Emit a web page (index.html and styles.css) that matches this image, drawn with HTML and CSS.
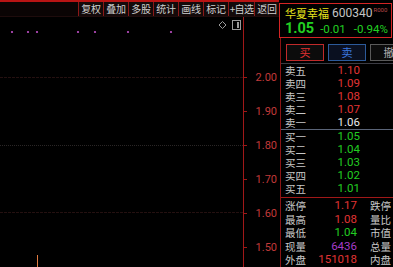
FILE: index.html
```html
<!DOCTYPE html>
<html>
<head>
<meta charset="utf-8">
<link rel="stylesheet" href="styles.css">
</head>
<body>
<div class="screen">
  <div class="left">
    <div class="topline"></div>
    <div class="toolbar">
      <span class="tb">复权</span>
      <span class="tb">叠加</span>
      <span class="tb">多股</span>
      <span class="tb">统计</span>
      <span class="tb">画线</span>
      <span class="tb">标记</span>
      <span class="tb tb-plus">+自选</span>
      <span class="tb">返回</span>
    </div>
    <div class="chart">
      <div class="plot">
        <svg class="plot-svg" width="243" height="250" viewBox="0 0 243 250">
          <line x1="0" y1="60.5" x2="243" y2="60.5" stroke="#241010" stroke-dasharray="3 1"/>
          <line x1="0" y1="128.5" x2="243" y2="128.5" stroke="#2a2626" stroke-dasharray="1 1"/>
          <line x1="0" y1="195.5" x2="243" y2="195.5" stroke="#241010" stroke-dasharray="3 1"/>
          <g fill="#c050c8">
            <circle cx="12" cy="15" r="1.1"/>
            <circle cx="28" cy="15" r="1.1"/>
            <circle cx="37" cy="15" r="1.1"/>
            <circle cx="78" cy="15" r="1.1"/>
            <circle cx="95" cy="15" r="1.1"/>
            <circle cx="128" cy="15" r="1.1"/>
            <circle cx="171" cy="15" r="1.1"/>
          </g>
          <path d="M222.5 4.5 L226 8 L222.5 11.5 L219 8 Z" fill="none" stroke="#9a9a9a" stroke-width="1"/>
          <rect x="232.5" y="3.5" width="8" height="9" fill="none" stroke="#9a9a9a" stroke-width="1"/>
          <line x1="238" y1="5" x2="238" y2="11" stroke="#d0d0d0" stroke-width="1.5"/>
          <line x1="37.5" y1="238" x2="37.5" y2="250" stroke="#e07a40" stroke-width="1"/>
        </svg>
      </div>
      <div class="axis">
        <span class="ax">2.00</span>
        <span class="ax">1.90</span>
        <span class="ax">1.80</span>
        <span class="ax">1.70</span>
        <span class="ax">1.60</span>
        <span class="ax">1.50</span>
      </div>
    </div>
  </div>
  <div class="right">
    <div class="quote">
      <div class="q-line1"><span class="q-name">华夏幸福</span><span class="q-code">600340</span><span class="q-tag">R000</span></div>
      <div class="q-line2"><span class="q-price">1.05</span><span class="q-chg">-0.01</span><span class="q-pct">-0.94%</span></div>
    </div>
    <div class="panel">
      <div class="btns">
        <span class="btn btn-buy">买</span>
        <span class="btn btn-sell">卖</span>
        <span class="btn btn-cancel">撤</span>
      </div>
      <div class="book sells">
        <div class="row"><span class="lb">卖五</span><span class="val up">1.10</span></div>
        <div class="row"><span class="lb">卖四</span><span class="val up">1.09</span></div>
        <div class="row"><span class="lb">卖三</span><span class="val up">1.08</span></div>
        <div class="row"><span class="lb">卖二</span><span class="val up">1.07</span></div>
        <div class="row"><span class="lb">卖一</span><span class="val flat">1.06</span></div>
      </div>
      <div class="book buys">
        <div class="row"><span class="lb">买一</span><span class="val down">1.05</span></div>
        <div class="row"><span class="lb">买二</span><span class="val down">1.04</span></div>
        <div class="row"><span class="lb">买三</span><span class="val down">1.03</span></div>
        <div class="row"><span class="lb">买四</span><span class="val down">1.02</span></div>
        <div class="row"><span class="lb">买五</span><span class="val down">1.01</span></div>
      </div>
      <div class="stats">
        <div class="srow"><span class="lb">涨停</span><span class="val up">1.17</span><span class="lb2">跌停</span></div>
        <div class="srow"><span class="lb">最高</span><span class="val up">1.08</span><span class="lb2">量比</span></div>
        <div class="srow"><span class="lb">最低</span><span class="val down">1.04</span><span class="lb2">市值</span></div>
        <div class="srow"><span class="lb">现量</span><span class="val vol">6436</span><span class="lb2">总量</span></div>
        <div class="srow"><span class="lb">外盘</span><span class="val up">151018</span><span class="lb2">内盘</span></div>
      </div>
    </div>
  </div>
</div>
</body>
</html>
```
FILE: styles.css
```css
html, body {
  margin: 0;
  padding: 0;
  background: #000;
}
body {
  width: 393px;
  height: 267px;
  overflow: hidden;
  font-family: "Noto Sans CJK SC", "Noto Sans", sans-serif;
  color: #c8c8c8;
}
.screen {
  display: flex;
  width: 393px;
  height: 267px;
  overflow: hidden;
}
.left {
  width: 279px;
  flex: none;
  display: flex;
  flex-direction: column;
}
.topline {
  height: 2px;
  background: #b81414;
}
.toolbar {
  height: 15px;
  display: flex;
  justify-content: flex-end;
  background: #0a0404;
  box-sizing: border-box;
  border-bottom: 1px solid #1e0c0c;
}
.tb {
  width: 25px;
  flex: none;
  box-sizing: border-box;
  border-left: 1px solid #8a1818;
  background: #140a0a;
  font-size: 10px;
  line-height: 14px;
  text-align: center;
  color: #cfcfcf;
  white-space: nowrap;
  letter-spacing: -0.3px;
}
.tb-plus {
  width: 26px;
  letter-spacing: -0.6px;
}
.chart {
  flex: 1;
  display: flex;
}
.plot {
  width: 243px;
  flex: none;
  border-right: 1px solid #a01818;
}
.plot-svg {
  display: block;
}
.axis {
  flex: 1;
  display: flex;
  flex-direction: column;
  padding-top: 43px;
}
.ax {
  height: 34px;
  display: flex;
  align-items: center;
  justify-content: flex-end;
  padding-right: 2px;
  font-family: Roboto, "Noto Sans", sans-serif;
  font-size: 11px;
  color: #c23a3a;
  position: relative;
}
.ax::before {
  content: "";
  position: absolute;
  left: 0;
  top: 17px;
  width: 3px;
  height: 1px;
  background: #a01818;
}
.right {
  width: 114px;
  flex: none;
  display: flex;
  flex-direction: column;
}
.quote {
  margin-top: 3px;
  height: 35px;
  box-sizing: border-box;
  border: 1px solid #d42424;
  margin-right: 1px;
  padding: 1px 0 0 5px;
}
.q-line1 {
  display: flex;
  align-items: flex-start;
  height: 16px;
  line-height: 16px;
  white-space: nowrap;
}
.q-name {
  font-size: 11px;
  color: #e6e21c;
}
.q-code {
  font-family: Roboto, "Noto Sans", sans-serif;
  font-size: 12px;
  color: #c4c4c4;
  margin-left: 3px;
}
.q-tag {
  font-family: Roboto, "Noto Sans", sans-serif;
  font-size: 6px;
  line-height: 10px;
  color: #b84a4a;
  margin-left: 1px;
}
.q-line2 {
  display: flex;
  align-items: baseline;
  height: 16px;
  line-height: 16px;
  white-space: nowrap;
  color: #22d022;
  font-family: Roboto, "Noto Sans", sans-serif;
}
.q-price {
  font-size: 14.5px;
  font-weight: bold;
}
.q-chg {
  font-size: 11.5px;
  margin-left: 6px;
}
.q-pct {
  font-size: 11.5px;
  margin-left: 8px;
}
.panel {
  flex: 1;
  border-left: 1px solid #8a1414;
  margin-left: 1px;
}
.btns {
  display: flex;
  gap: 4px;
  padding: 6px 0 2px 5px;
  border-bottom: 1px solid #3c3c44;
  overflow: hidden;
}
.btn {
  width: 38px;
  height: 17px;
  flex: none;
  box-sizing: border-box;
  font-size: 11px;
  line-height: 15px;
  text-align: center;
  background: #0c0c0c;
}
.btn-buy {
  border: 1px solid #c02a2a;
  color: #e03030;
}
.btn-sell {
  border: 1px solid #2c5a9a;
  color: #3a78e0;
  background: #0a1020;
}
.btn-cancel {
  border: 1px solid #5a5a5a;
  color: #b0b0b0;
}
.book {
  display: flex;
  flex-direction: column;
}
.sells {
  border-bottom: 1px solid #5a6478;
}
.buys {
  padding-bottom: 2px;
  border-bottom: 1px solid #a01818;
}
.row, .srow {
  display: flex;
  align-items: center;
  height: 13px;
  line-height: 13px;
  padding-left: 4px;
  white-space: nowrap;
}
.srow {
  height: 13.6px;
  line-height: 13.6px;
}
.lb {
  width: 30px;
  font-size: 10.5px;
  color: #c8c8c8;
}
.val {
  width: 45px;
  text-align: right;
  font-family: Roboto, "Noto Sans", sans-serif;
  font-size: 11.5px;
}
.stats .val {
  width: 42px;
}
.lb2 {
  margin-left: 13px;
  font-size: 10.5px;
  color: #c8c8c8;
}
.up { color: #e03434; }
.down { color: #22cc22; }
.flat { color: #e8e8e8; }
.vol { color: #a43cc8; }
.stats {
  padding-top: 1px;
}
```
